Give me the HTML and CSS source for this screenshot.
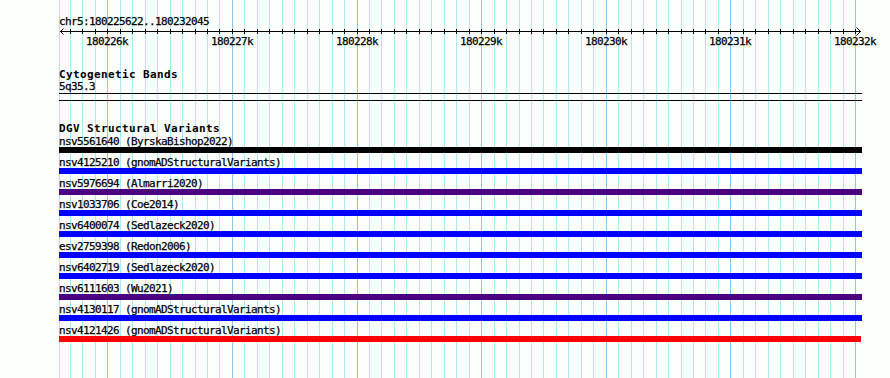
FILE: index.html
```html
<!DOCTYPE html>
<html lang="en">
<head>
<meta charset="utf-8">
<title>Genome browser view</title>
<link rel="stylesheet" href="styles.css">
</head>
<body>
<svg class="grid" width="890" height="378" viewBox="0 0 890 378" aria-hidden="true">
  <path class="grid-minor" d="M59.5 0V378M70.5 0V378M82.5 0V378M95.5 0V378M120.5 0V378M132.5 0V378M145.5 0V378M157.5 0V378M170.5 0V378M182.5 0V378M195.5 0V378M207.5 0V378M219.5 0V378M244.5 0V378M257.5 0V378M269.5 0V378M282.5 0V378M294.5 0V378M307.5 0V378M319.5 0V378M332.5 0V378M344.5 0V378M369.5 0V378M381.5 0V378M394.5 0V378M406.5 0V378M419.5 0V378M431.5 0V378M444.5 0V378M456.5 0V378M469.5 0V378M494.5 0V378M506.5 0V378M519.5 0V378M531.5 0V378M543.5 0V378M556.5 0V378M568.5 0V378M581.5 0V378M593.5 0V378M618.5 0V378M631.5 0V378M643.5 0V378M656.5 0V378M668.5 0V378M681.5 0V378M693.5 0V378M705.5 0V378M718.5 0V378M743.5 0V378M755.5 0V378M768.5 0V378M780.5 0V378M793.5 0V378M805.5 0V378M818.5 0V378M830.5 0V378M843.5 0V378"/>
  <path class="grid-major" d="M107.5 0V378M232.5 0V378M357.5 0V378M481.5 0V378M606.5 0V378M730.5 0V378M855.5 0V378"/>
</svg>
<main class="view">
  <div class="locus">chr5:180225622..180232045</div>
  <svg class="ruler" width="890" height="20" viewBox="0 0 890 20">
    <path class="ruler-axis" d="M60 4.5H861"/>
    <path class="ruler-arrow" d="M63.5 1.5L60.5 4.5L63.5 7.5M856.5 0.5L860.5 4.5L856.5 8.5"/>
    <path class="ruler-ticks" d="M70.5 2v5M82.5 2v5M95.5 2v5M107.5 2v5M120.5 2v5M132.5 2v5M145.5 2v5M157.5 2v5M170.5 2v5M182.5 2v5M195.5 2v5M207.5 2v5M219.5 2v5M232.5 2v5M244.5 2v5M257.5 2v5M269.5 2v5M282.5 2v5M294.5 2v5M307.5 2v5M319.5 2v5M332.5 2v5M344.5 2v5M357.5 2v5M369.5 2v5M381.5 2v5M394.5 2v5M406.5 2v5M419.5 2v5M431.5 2v5M444.5 2v5M456.5 2v5M469.5 2v5M481.5 2v5M494.5 2v5M506.5 2v5M519.5 2v5M531.5 2v5M543.5 2v5M556.5 2v5M568.5 2v5M581.5 2v5M593.5 2v5M606.5 2v5M618.5 2v5M631.5 2v5M643.5 2v5M656.5 2v5M668.5 2v5M681.5 2v5M693.5 2v5M705.5 2v5M718.5 2v5M730.5 2v5M743.5 2v5M755.5 2v5M768.5 2v5M780.5 2v5M793.5 2v5M805.5 2v5M818.5 2v5M830.5 2v5M843.5 2v5M855.5 2v5"/>
    <g class="ruler-labels">
      <text x="107" y="18">180226k</text>
      <text x="232" y="18">180227k</text>
      <text x="357" y="18">180228k</text>
      <text x="481" y="18">180229k</text>
      <text x="606" y="18">180230k</text>
      <text x="730" y="18">180231k</text>
      <text x="855" y="18">180232k</text>
    </g>
  </svg>

  <section class="track track-cyto">
    <h2 class="track-title">Cytogenetic Bands</h2>
    <div class="band-label">5q35.3</div>
    <div class="band"></div>
  </section>

  <section class="track track-dgv">
    <h2 class="track-title">DGV Structural Variants</h2>
    <ul class="features">
      <li class="feature"><span class="feature-label">nsv5561640 (ByrskaBishop2022)</span><div class="bar bar-black"></div></li>
      <li class="feature"><span class="feature-label">nsv4125210 (gnomADStructuralVariants)</span><div class="bar bar-blue"></div></li>
      <li class="feature"><span class="feature-label">nsv5976694 (Almarri2020)</span><div class="bar bar-purple"></div></li>
      <li class="feature"><span class="feature-label">nsv1033706 (Coe2014)</span><div class="bar bar-blue"></div></li>
      <li class="feature"><span class="feature-label">nsv6400074 (Sedlazeck2020)</span><div class="bar bar-blue"></div></li>
      <li class="feature"><span class="feature-label">esv2759398 (Redon2006)</span><div class="bar bar-blue"></div></li>
      <li class="feature"><span class="feature-label">nsv6402719 (Sedlazeck2020)</span><div class="bar bar-blue"></div></li>
      <li class="feature"><span class="feature-label">nsv6111603 (Wu2021)</span><div class="bar bar-purple"></div></li>
      <li class="feature"><span class="feature-label">nsv4130117 (gnomADStructuralVariants)</span><div class="bar bar-blue"></div></li>
      <li class="feature"><span class="feature-label">nsv4121426 (gnomADStructuralVariants)</span><div class="bar bar-red" style="width: 802px"></div></li>
    </ul>
  </section>
</main>
</body>
</html>
```
FILE: styles.css
```css
html, body {
  margin: 0;
  padding: 0;
}

body {
  width: 890px;
  height: 378px;
  position: relative;
  overflow: hidden;
  background: #fdfffd;
  color: #000;
  font-family: "DejaVu Sans Mono", "Liberation Mono", monospace;
  font-size: 11px;
  letter-spacing: -0.62px;
  -webkit-text-stroke: 0.25px #000;
}

.grid {
  position: absolute;
  left: 0;
  top: 0;
  display: block;
}

.grid-minor {
  stroke: #a8ecf2;
  stroke-width: 1;
  fill: none;
  shape-rendering: crispEdges;
}

.grid-major {
  stroke: #86c8f0;
  stroke-width: 1;
  fill: none;
  shape-rendering: crispEdges;
}

.view {
  position: relative;
  padding-top: 16px;
}

.locus {
  height: 11px;
  line-height: 11px;
  padding-left: 59px;
  white-space: nowrap;
}

.ruler {
  display: block;
}

.ruler-axis,
.ruler-ticks {
  stroke: #000;
  stroke-width: 1;
  fill: none;
  shape-rendering: crispEdges;
}

.ruler-arrow {
  stroke: #000;
  stroke-width: 1;
  fill: none;
}

.ruler-labels text {
  font-family: "DejaVu Sans Mono", "Liberation Mono", monospace;
  font-size: 11px;
  letter-spacing: -0.62px;
  text-anchor: middle;
  fill: #000;
  stroke: #000;
  stroke-width: 0.25px;
}

.track {
  margin-left: 59px;
  width: 803px;
}

.track-cyto {
  margin-top: 22px;
}

.track-dgv {
  margin-top: 22px;
}

.track-title {
  margin: 0;
  font-size: 11px;
  font-weight: bold;
  line-height: 11px;
  height: 11px;
  letter-spacing: 0.38px;
  white-space: nowrap;
  -webkit-text-stroke: 0;
}

.track-dgv .track-title {
  margin-bottom: 2px;
}

.band-label {
  margin-top: 1px;
  line-height: 11px;
  height: 11px;
}

.band {
  margin-top: 1px;
  height: 6px;
  border-top: 1px solid #000;
  border-bottom: 1px solid #000;
}

.features {
  list-style: none;
  margin: 0;
  padding: 0;
}

.feature-label {
  display: block;
  height: 11px;
  line-height: 11px;
  white-space: nowrap;
}

.bar {
  height: 6px;
  margin-bottom: 4px;
}

.bar-black { background: #000; }
.bar-blue { background: #0000ff; }
.bar-purple { background: #4b0082; }
.bar-red { background: #ff0000; }
```
